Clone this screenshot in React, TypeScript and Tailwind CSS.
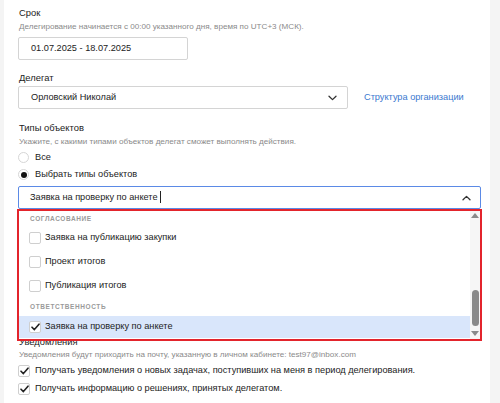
import React from 'react';

const font = { fontFamily: '"Liberation Sans", Arial, sans-serif' };

const Check = () => (
  <svg width="9" height="8" viewBox="0 0 9 8" fill="none">
    <path d="M1 4.2 L3.4 6.6 L8 1.2" stroke="#222" strokeWidth="1.6" strokeLinecap="round" strokeLinejoin="round" />
  </svg>
);

const Box = ({ checked }: { checked?: boolean }) => (
  <span className="flex h-[12px] w-[12px] shrink-0 items-center justify-center rounded-[2px] border border-[#cfcfcf] bg-white">
    {checked && <Check />}
  </span>
);

const Chevron = ({ up }: { up?: boolean }) => (
  <svg width="9" height="6" viewBox="0 0 9 6" fill="none" className={up ? 'rotate-180' : ''}>
    <path d="M1 1.2 L4.5 4.6 L8 1.2" stroke="#333" strokeWidth="1.3" strokeLinecap="round" strokeLinejoin="round" />
  </svg>
);

const Radio = ({ checked, label }: { checked?: boolean; label: string }) => (
  <div className="flex h-[17px] items-center gap-[6px]">
    <span className="flex h-[11px] w-[11px] items-center justify-center rounded-full border border-[#d6d6d6] bg-white">
      {checked && <span className="h-[6px] w-[6px] rounded-full bg-[#111]" />}
    </span>
    <span className="text-[9.2px] text-[#222]">{label}</span>
  </div>
);

const Label = ({ children }: { children: React.ReactNode }) => (
  <div className="h-[15px] pl-[1px] text-[9.4px] leading-[15px] text-[#222]">{children}</div>
);

const Hint = ({ children, className = '' }: { children: React.ReactNode; className?: string }) => (
  <div className={`h-[11px] pl-[1px] text-[8.1px] leading-[11px] text-[#8a8a8a] ${className}`}>{children}</div>
);

const groups = [
  {
    title: 'СОГЛАСОВАНИЕ',
    items: ['Заявка на публикацию закупки', 'Проект итогов', 'Публикация итогов'],
  },
];

export default function App() {
  return (
    <div className="flex h-[403px] w-[500px] overflow-hidden bg-[#f4f4f4]" style={font}>
      <div className="ml-[4px] w-[486px] bg-white pl-[14px] pt-[5px]">
        <Label>Срок</Label>
        <Hint className="mt-[1px]">Делегирование начинается с 00:00 указанного дня, время по UTC+3 (МСК).</Hint>
        <div className="mt-[5px] flex h-[23px] w-[170px] items-center rounded-[2px] border border-[#d4d4d4] pl-[12px] text-[9.2px] text-[#222]">
          01.07.2025 - 18.07.2025
        </div>

        <div className="mt-[10px]">
          <Label>Делегат</Label>
        </div>
        <div className="mt-[1px] flex items-center">
          <div className="flex h-[23px] w-[330px] items-center justify-between rounded-[2px] border border-[#d4d4d4] pl-[12px] pr-[10px] text-[9.2px] text-[#222]">
            <span>Орловский Николай</span>
            <Chevron />
          </div>
          <span className="ml-[16px] text-[9.2px] text-[#3a78cf]">Структура организации</span>
        </div>

        <div className="mt-[11px]">
          <Label>Типы объектов</Label>
        </div>
        <Hint className="mt-[1px]">Укажите, с какими типами объектов делегат сможет выполнять действия.</Hint>
        <div className="mt-[2px]">
          <Radio label="Все" />
          <Radio checked label="Выбрать типы объектов" />
        </div>

        <div className="relative mt-[3px] w-[463px]">
          <div className="flex h-[23px] items-center justify-between rounded-[2px] border border-[#5b8ae6] pl-[11px] pr-[9px] text-[9.2px] text-[#222]">
            <span className="flex items-center">
              Заявка на проверку по анкете&nbsp;
              <span className="inline-block h-[12px] w-px bg-[#222]" />
            </span>
            <Chevron up />
          </div>

          <div className="absolute left-[-1px] right-[-1px] top-full z-10 flex h-[132px] border-2 border-[#e3242c] bg-white">
            <div className="flex-1">
              {groups.map((g) => (
                <div key={g.title}>
                  <div className="flex h-[15px] items-center pl-[11px] text-[6.5px] font-bold tracking-[0.6px] text-[#9a9a9a]">
                    {g.title}
                  </div>
                  {g.items.map((it) => (
                    <div key={it} className="flex h-[24px] items-center gap-[4px] pl-[10px] text-[9.2px] text-[#222]">
                      <Box />
                      <span>{it}</span>
                    </div>
                  ))}
                </div>
              ))}
              <div className="flex h-[18px] items-center pl-[11px] text-[6.5px] font-bold tracking-[0.6px] text-[#9a9a9a]">
                ОТВЕТСТВЕННОСТЬ
              </div>
              <div className="flex h-[22px] items-center gap-[4px] bg-[#d9e6fb] pl-[10px] text-[9.2px] text-[#222]">
                <Box checked />
                <span>Заявка на проверку по анкете</span>
              </div>
            </div>
            <div className="flex w-[10px] flex-col items-center bg-[#f6f6f6]">
              <svg width="8" height="5" viewBox="0 0 8 5" className="mt-[2px]">
                <path d="M0 5 L4 0 L8 5 Z" fill="#8a8a8a" />
              </svg>
              <div className="mt-[72px] h-[36px] w-[7px] rounded-full bg-[#8a8a8a]" />
              <svg width="8" height="5" viewBox="0 0 8 5" className="mt-[5px]">
                <path d="M0 0 L4 5 L8 0 Z" fill="#8a8a8a" />
              </svg>
            </div>
          </div>
        </div>

        <div className="mt-[125px]">
          <Label>Уведомления</Label>
        </div>
        <Hint>Уведомления будут приходить на почту, указанную в личном кабинете: test97@inbox.com</Hint>
        <div className="mt-[2px]">
          <div className="flex h-[18px] items-center gap-[5px] text-[9.2px] text-[#222]">
            <Box checked />
            <span>Получать уведомления о новых задачах, поступивших на меня в период делегирования.</span>
          </div>
          <div className="flex h-[18px] items-center gap-[5px] text-[9.2px] text-[#222]">
            <Box checked />
            <span>Получать информацию о решениях, принятых делегатом.</span>
          </div>
        </div>
      </div>
    </div>
  );
}
